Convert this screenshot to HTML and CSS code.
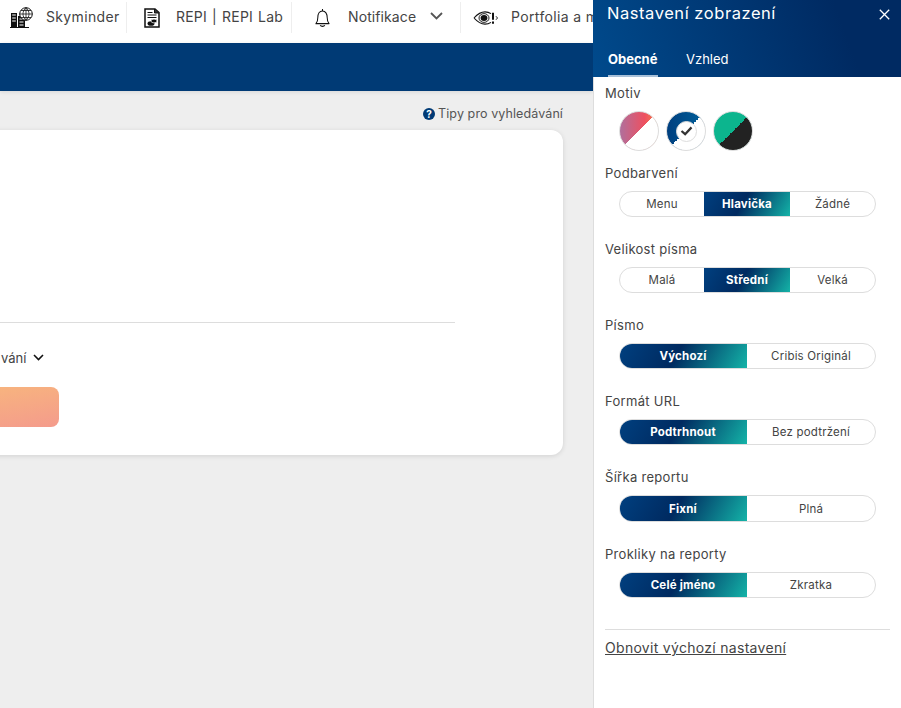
FILE: index.html
```html
<!DOCTYPE html>
<html lang="cs">
<head>
<meta charset="utf-8">
<title>Nastavení zobrazení</title>
<link rel="stylesheet" href="styles.css">
</head>
<body>
<div class="app">
  <div class="page">
    <nav class="topbar">
      <a class="nav-item item-sky">
        <svg class="ic-building" viewBox="0 0 23 21"><path d="M0 20.500h19" stroke="#111" stroke-width="1"/><path d="M1 6h6v14H1zM8 9h7v11H8z" fill="#111"/><path d="M2.200 8h3.600M2.200 11h3.600M2.200 14h3.600M9.500 12h4M9.500 15h4M9.500 18h4" stroke="#fff" stroke-width="1.200"/><circle cx="16" cy="7" r="6.300" fill="#fff" stroke="#111"/><path d="M9.700 7h12.600M16 .7v12.600M11 3.500h10M11 10.500h10M16 .7c-4 3.500-4 9 0 12.600M16 .7c4 3.500 4 9 0 12.600" fill="none" stroke="#111" stroke-width=".8"/></svg>
        <span>Skyminder</span>
      </a>
      <a class="nav-item item-repi">
        <svg class="ic-doc" viewBox="0 0 16 20"><path d="M1 1h10l4 3.500V19H1z" fill="#fff" stroke="#111" stroke-width="1.500"/><path d="M10.500 1v4H15" fill="#333" stroke="#111"/><path d="M3.500 4.500h5M3.500 7h9M3.500 9.500h9" stroke="#111"/><ellipse cx="7" cy="15.500" rx="3.500" ry="2.300" fill="#111"/><ellipse cx="10" cy="13" rx="3" ry="1.900" fill="#111" stroke="#fff" stroke-width=".7"/></svg>
        <span>REPI | REPI Lab</span>
      </a>
      <a class="nav-item item-notif">
        <svg class="ic-bell" viewBox="0 0 16 20"><path d="M1 16c1.500-1.500 2-3 2-6.500C3 5.500 4.800 2.500 8 2.500s5 3 5 7c0 3.500.5 5 2 6.500z" fill="none" stroke="#111" stroke-width="1.100" stroke-linejoin="round"/><path d="M8 .5v2M5.500 17.800c1 1.500 4 1.500 5 0" fill="none" stroke="#111" stroke-width="1.100"/></svg>
        <span>Notifikace</span>
        <svg class="ic-chev" viewBox="0 0 13 8"><path d="M1 1l5.500 5.500L12 1" fill="none" stroke="#555" stroke-width="1.800"/></svg>
      </a>
      <a class="nav-item item-port">
        <svg class="ic-eye" viewBox="0 0 25 16" preserveAspectRatio="none"><path d="M1 8c4-5 8-7 11-7s4 .5 6 2M1 8c4 5 8 7 11 7s4-.5 6-2" fill="none" stroke="#111" stroke-width="1.200"/><circle cx="11" cy="8" r="5" fill="none" stroke="#111"/><circle cx="11" cy="8" r="3.400" fill="#111"/><path d="M20 2v8M20 12v2.500" stroke="#111" stroke-width="2"/><path d="M23 6l1.500 2-1.500 2" fill="none" stroke="#111"/></svg>
        <span class="nowrap">Portfolia a monitoring</span>
      </a>
    </nav>
    <div class="band"></div>
    <main class="content">
      <a class="tips"><svg class="ic-help" viewBox="0 0 12 12"><circle cx="6" cy="6" r="6" fill="#003a75"/><text x="6" y="9.500" class="help-mark">?</text></svg>Tipy pro vyhledávání</a>
      <section class="card">
        <div class="card-body">
          <hr class="rule">
          <a class="more"><span class="nowrap">vání</span><svg class="ic-more" viewBox="0 0 11 7"><path d="M1 1l4.500 4.500L10 1" fill="none" stroke="#111" stroke-width="1.600"/></svg></a>
          <div class="search-btn"></div>
        </div>
      </section>
    </main>
  </div>

  <aside class="drawer">
    <header class="drawer-head">
      <div class="drawer-title">
        <h1>Nastavení zobrazení</h1>
        <svg class="ic-close" viewBox="0 0 11 11"><path d="M.8.8l9.400 9.400M10.200.8L.8 10.200" stroke="#fff" stroke-width="1.300"/></svg>
      </div>
      <div class="tabs">
        <a class="tab active">Obecné</a>
        <a class="tab">Vzhled</a>
      </div>
    </header>
    <div class="drawer-body">
      <div class="label label-first">Motiv</div>
      <div class="themes">
        <span class="theme t-red"></span>
        <span class="theme t-blue"><span class="theme-check"><svg viewBox="0 0 14 11"><path d="M1.500 5.500l4 3.500L12.500 1.500" fill="none" stroke="#333" stroke-width="2.500"/></svg></span></span>
        <span class="theme t-green"></span>
      </div>

      <div class="label">Podbarvení</div>
      <div class="seg seg-3"><span>Menu</span><span class="on">Hlavička</span><span>Žádné</span></div>

      <div class="label">Velikost písma</div>
      <div class="seg seg-3"><span>Malá</span><span class="on">Střední</span><span>Velká</span></div>

      <div class="label">Písmo</div>
      <div class="seg seg-2"><span class="on">Výchozí</span><span>Cribis Originál</span></div>

      <div class="label">Formát URL</div>
      <div class="seg seg-2"><span class="on">Podtrhnout</span><span>Bez podtržení</span></div>

      <div class="label">Šířka reportu</div>
      <div class="seg seg-2 seg-tall"><span class="on">Fixní</span><span>Plná</span></div>

      <div class="label">Prokliky na reporty</div>
      <div class="seg seg-2"><span class="on">Celé jméno</span><span>Zkratka</span></div>

      <hr class="drawer-rule">
      <a class="reset">Obnovit výchozí nastavení</a>
    </div>
  </aside>
</div>
</body>
</html>
```

FILE: styles.css
```css
* { box-sizing: border-box; }
html, body { margin: 0; height: 100%; overflow: hidden; }
body { font-family: Inter, "Noto Sans", "Liberation Sans", sans-serif; color: #444; background: #eee; }
.app { display: flex; height: 708px; }
.nowrap { white-space: nowrap; }

.page { width: 593px; flex: none; overflow: hidden; display: flex; flex-direction: column; }
.topbar { height: 43px; flex: none; background: #fff; display: flex; align-items: flex-start; padding-top: 2px; }
.nav-item { height: 31px; padding-bottom: 3px; flex: none; display: flex; align-items: center; font-size: 14px; letter-spacing: .35px; color: #444; white-space: nowrap; }
.nav-item > span { display: block; }
.nav-item > svg { margin-top: 3px; }
.nav-item > .ic-chev { margin-top: 0; }
.item-sky { width: 127px; padding-left: 10px; gap: 13px; border-right: 1px solid #eee; }
.item-repi { width: 165px; padding-left: 17px; gap: 16px; border-right: 1px solid #eee; letter-spacing: .2px; word-spacing: 1px; }
.item-notif { width: 169px; padding-left: 23px; border-right: 1px solid #eee; letter-spacing: .1px; }
.item-notif span { margin: 0 14px 0 18px; }
.item-port { padding-left: 12px; gap: 13px; }
.ic-building { width: 23px; height: 21px; flex: none; }
.ic-doc { width: 16px; height: 20px; flex: none; }
.ic-bell { width: 15px; height: 20px; flex: none; }
.ic-chev { width: 13px; height: 8px; flex: none; }
.ic-eye { width: 25px; height: 14px; flex: none; }

.band { height: 48px; flex: none; background: #003a75; box-shadow: 0 1px 4px rgba(0, 0, 0, .1); }
.content { flex: 1; display: flex; flex-direction: column; align-items: flex-end; padding: 14px 30px 0 0; }
.tips { display: flex; align-items: center; gap: 3px; height: 17px; font-size: 12.500px; letter-spacing: .1px; color: #555; white-space: nowrap; }
.ic-help { width: 12px; height: 12px; flex: none; }
.help-mark { font-size: 10px; font-weight: 700; fill: #fff; text-anchor: middle; }
.card { margin-top: 8px; height: 325px; width: 760px; flex: none; background: #fff; border-radius: 12px; box-shadow: 0 1px 5px rgba(0, 0, 0, .12); padding: 0 108px 0 0; display: flex; justify-content: flex-end; }
.card-body { width: 596px; flex: none; padding-top: 192px; }
.rule { margin: 0; border: 0; border-top: 1px solid #ddd; }
.more { display: flex; align-items: center; gap: 7px; margin-top: 26px; height: 17px; padding-left: 142px; font-size: 13px; color: #444; }
.ic-more { width: 11px; height: 7px; flex: none; }
.search-btn { margin-top: 21px; width: 200px; height: 40px; border-radius: 8px; background: linear-gradient(170deg, #f9bf78, #f49b8c); }

.drawer { width: 308px; flex: none; height: 708px; background: #fff; display: flex; flex-direction: column; }
.drawer-head { height: 77px; flex: none; background: linear-gradient(70deg, #004a8c, #002a62 80%); padding: 0 11px 0 14px; color: #fff; }
.drawer-title { display: flex; justify-content: space-between; align-items: center; height: 26px; }
.drawer-title h1 { margin: 0; font-size: 16.500px; font-weight: 400; letter-spacing: .55px; }
.ic-close { width: 11px; height: 11px; flex: none; margin-top: 3px; }
.tabs { display: flex; gap: 28px; margin-top: 25px; padding-left: 1px; }
.tab { height: 26px; font-size: 13px; color: #fff; }
.tab.active { font-weight: 700; border-bottom: 2px solid #a8c0d8; width: 50px; }

.drawer-body { flex: 1; border-left: 1px solid #ddd; padding: 0 11px; }
.label { height: 18px; font-size: 13px; line-height: 18px; color: #444; margin-top: 23px; letter-spacing: .3px; }
.label-first { margin-top: 7px; }
.themes { display: flex; gap: 7px; padding-left: 14px; margin-top: 9px; margin-bottom: -10px; }
.theme { width: 40px; height: 40px; border-radius: 50%; border: 1.500px solid #ddd; flex: none; display: flex; align-items: center; justify-content: center; }
.t-red { background: linear-gradient(135deg, transparent 50%, #fff 50%), linear-gradient(90deg, #b06f9c, #ee5060 65%, #f58348); }
.t-blue { background: linear-gradient(135deg, transparent 50%, #fff 50%), linear-gradient(90deg, #003f7f, #00609a); }
.t-green { background: linear-gradient(135deg, transparent 50%, #222 50%), linear-gradient(90deg, #0cb58e, #0cb58e); }
.theme-check { width: 21px; height: 21px; border-radius: 50%; background: #fff; border: 1px solid #ddd; display: flex; align-items: center; justify-content: center; }
.theme-check svg { width: 13px; height: 10px; }

.seg { margin: 9px 14px 0 14px; height: 26px; display: grid; border: 1px solid #ddd; border-radius: 13px; overflow: hidden; font-size: 11.500px; letter-spacing: .2px; color: #444; }
.seg-3 { grid-template-columns: 84px 86px 1fr; }
.seg-2 { grid-template-columns: 127px 1fr; }
.seg-tall { height: 27px; }
.seg span { display: flex; align-items: center; justify-content: center; }
.seg .on { background: linear-gradient(120deg, #004080, #002a60 45%, #14b4a8); color: #fff; font-weight: 700; margin: -1px 0; }
.seg-2 .on { margin-left: -1px; }

.drawer-rule { margin: 31px 0 0; border: 0; border-top: 1px solid #ddd; }
.reset { display: block; margin-top: 9px; font-size: 14px; color: #444; text-decoration: underline; letter-spacing: .3px; }
```
